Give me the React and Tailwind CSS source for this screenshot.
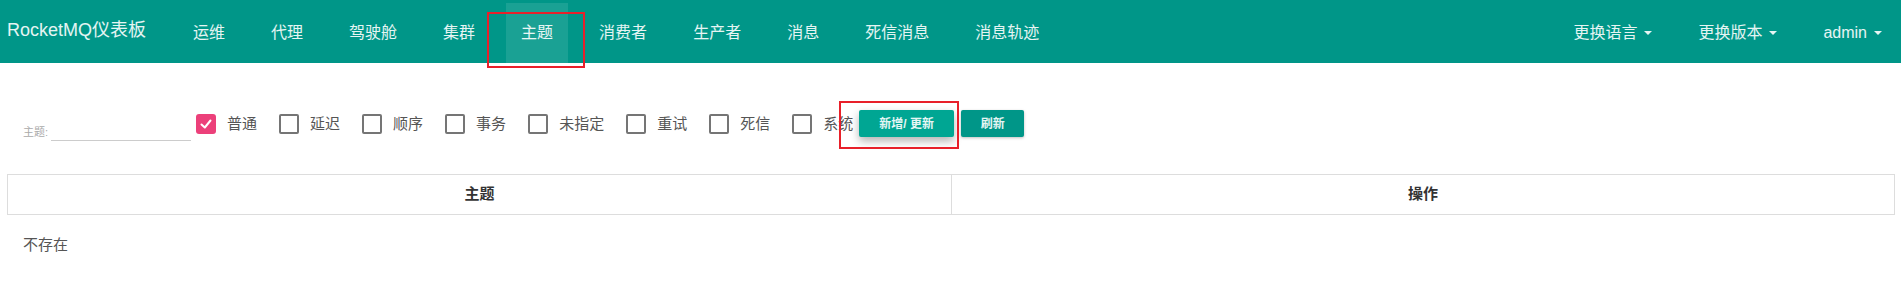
import React from 'react';

const NAV = ['运维', '代理', '驾驶舱', '集群', '主题', '消费者', '生产者', '消息', '死信消息', '消息轨迹'];
const RIGHT = ['更换语言', '更换版本', 'admin'];
const TYPES = [
  { label: '普通', checked: true },
  { label: '延迟' },
  { label: '顺序' },
  { label: '事务' },
  { label: '未指定' },
  { label: '重试' },
  { label: '死信' },
  { label: '系统' },
];

function Checkbox({ checked }) {
  if (checked) {
    return (
      <span className="w-[20px] h-[20px] rounded-[3px] bg-[#ec407a] flex items-center justify-center shrink-0">
        <svg width="14" height="14" viewBox="0 0 14 14" fill="none">
          <polyline points="2.5,7.5 5.8,10.5 11.5,3.5" stroke="white" strokeWidth="2" strokeLinecap="round" strokeLinejoin="round" />
        </svg>
      </span>
    );
  }
  return <span className="w-[20px] h-[20px] rounded-[2px] border-2 border-[#757575] shrink-0" />;
}

export default function App() {
  return (
    <div className="relative w-full h-[308px] bg-white font-['Liberation_Sans','Noto_Sans_CJK_SC',sans-serif]">
      {/* top navbar */}
      <nav className="h-[63px] bg-[#009688] flex items-start text-white/90">
        <div className="pl-[7px] pt-[20px] text-[18px] leading-[20px]">RocketMQ仪表板</div>
        <ul className="flex gap-4 ml-[32px] mt-[3px]">
          {NAV.map((item) => (
            <li
              key={item}
              className={`h-[60px] px-[15px] flex items-center text-[16px] ${item === '主题' ? 'bg-white/10' : ''}`}
            >
              {item}
            </li>
          ))}
        </ul>
        <ul className="flex gap-4 ml-auto mt-[3px] pr-[4px]">
          {RIGHT.map((item) => (
            <li key={item} className="h-[60px] px-[15px] flex items-center text-[16px]">
              {item}
              <span className="ml-[7px] w-0 h-0 border-x-[4px] border-x-transparent border-t-[4px] border-t-white/90" />
            </li>
          ))}
        </ul>
      </nav>

      {/* filter row */}
      <div className="mt-[47px] h-[27px] flex items-center">
        <div className="flex items-end self-end mb-[-4px] ml-[23px]">
          <span className="text-[11px] leading-[14px] pb-[2px] text-[#aaa]">主题:</span>
          <div className="ml-[3px] w-[140px] h-[1px] bg-[#ccc]" />
        </div>
        <div className="flex items-center ml-[5px]">
          {TYPES.map((t, i) => (
            <label
              key={t.label}
              className={`flex items-center ${i === TYPES.length - 1 ? 'mr-[6px]' : 'mr-[22px]'}`}
            >
              <Checkbox checked={t.checked} />
              <span className="ml-[11px] text-[15px] leading-[20px] text-[#555]">{t.label}</span>
            </label>
          ))}
        </div>
        <button className="w-[95px] h-[27px] rounded-[2px] bg-[#00a693] text-white/90 text-[12px] font-bold shadow-[0_4px_8px_rgba(0,0,0,0.3)]">
          新增/ 更新
        </button>
        <button className="ml-[7px] w-[63px] h-[27px] rounded-[2px] bg-[#009688] text-white/90 text-[12px] font-bold shadow-[0_1px_3px_rgba(0,0,0,0.25)]">
          刷新
        </button>
      </div>

      {/* table */}
      <div className="mt-[37px] ml-[7px] mr-[6px] border border-[#ddd] grid grid-cols-2 h-[41px]">
        <div className="flex items-center justify-center text-[15px] font-bold text-[#333]">主题</div>
        <div className="flex items-center justify-center text-[15px] font-bold text-[#333] border-l border-[#ddd]">操作</div>
      </div>
      <div className="mt-[20px] pl-[23px] text-[15px] leading-[20px] text-[#555]">不存在</div>

      {/* red annotation boxes */}
      <div className="absolute left-[487px] top-[12px] w-[98px] h-[56px] border-2 border-[#e8202a]" />
      <div className="absolute left-[839px] top-[101px] w-[120px] h-[48px] border-2 border-[#e8202a]" />
    </div>
  );
}
